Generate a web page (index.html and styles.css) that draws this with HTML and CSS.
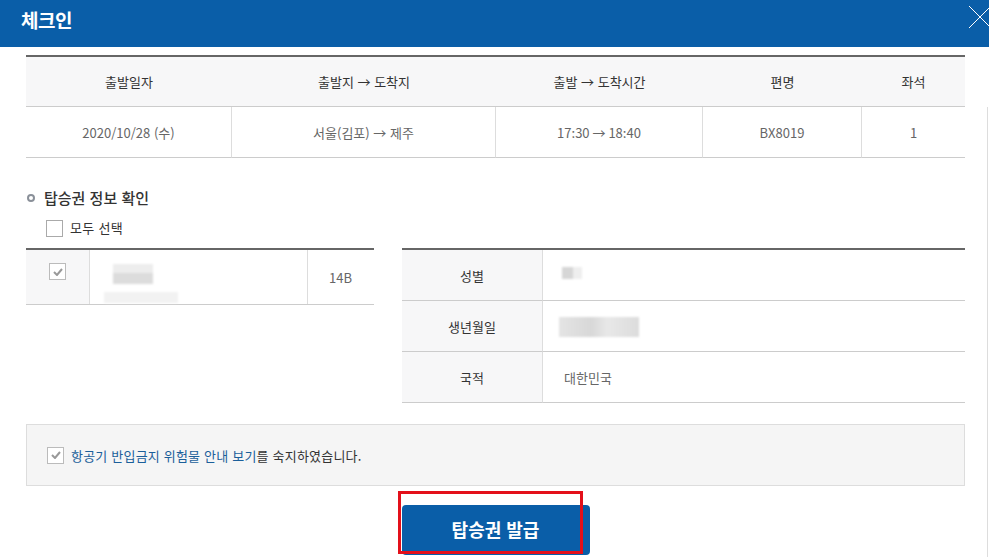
FILE: index.html
```html
<!DOCTYPE html>
<html lang="ko">
<head>
<meta charset="utf-8">
<title>체크인</title>
<link rel="stylesheet" href="styles.css">
</head>
<body>
<div class="modal">
  <div class="header">
    <h1 class="title">체크인</h1>
    <svg class="close" width="24" height="24" viewBox="0 0 24 24"><path d="M1 1 L23 23 M23 1 L1 23" stroke="#fff" stroke-width="1" fill="none"/></svg>
  </div>
  <div class="scrollline"></div>
  <div class="content">
    <div class="flight">
      <div class="fh">출발일자</div>
      <div class="fh">출발지 → 도착지</div>
      <div class="fh">출발 → 도착시간</div>
      <div class="fh">편명</div>
      <div class="fh">좌석</div>
      <div class="fd">2020/10/28 (수)</div>
      <div class="fd">서울(김포) → 제주</div>
      <div class="fd">17:30 → 18:40</div>
      <div class="fd">BX8019</div>
      <div class="fd last">1</div>
    </div>

    <div class="section-title"><span class="ring"></span>탑승권 정보 확인</div>
    <label class="select-all"><span class="cb"></span>모두 선택</label>

    <div class="pax">
      <div class="pax-list">
        <div class="pc check"><span class="cb checked"><svg width="10" height="8" viewBox="0 0 10 8"><path d="M1 4 L4 7 L9 1" stroke="#999" stroke-width="2" fill="none"/></svg></span></div>
        <div class="pc name">
          <span class="blur b1"></span>
          <span class="blur b2"></span>
        </div>
        <div class="pc seat">14B</div>
      </div>
      <div class="pax-info">
        <div class="lbl">성별</div><div class="val"><span class="blur b3"></span></div>
        <div class="lbl">생년월일</div><div class="val"><span class="blur b4"></span></div>
        <div class="lbl">국적</div><div class="val">대한민국</div>
      </div>
    </div>

    <div class="notice">
      <span class="cb checked"><svg width="10" height="8" viewBox="0 0 10 8"><path d="M1 4 L4 7 L9 1" stroke="#999" stroke-width="2" fill="none"/></svg></span>
      <span class="notice-text"><a class="link">항공기 반입금지 위험물 안내 보기</a>를 숙지하였습니다.</span>
    </div>

    <div class="actions">
      <button class="issue">탑승권 발급</button>
      <span class="mark"></span>
    </div>
  </div>
</div>
</body>
</html>
```

FILE: styles.css
```css
* { box-sizing: border-box; }
html, body { margin: 0; padding: 0; }
body {
  width: 989px;
  height: 557px;
  overflow: hidden;
  background: #fff;
  font-family: "Noto Sans CJK KR", "Noto Sans", sans-serif;
  color: #333;
}
.modal { position: relative; width: 989px; height: 557px; }
.header {
  height: 47px;
  background: #0a5ea8;
  display: flex;
  justify-content: space-between;
  align-items: flex-start;
  padding-left: 21px;
  overflow: hidden;
}
.title {
  margin: 8px 0 0 0;
  font-size: 19px;
  line-height: 24px;
  font-weight: 700;
  color: #fff;
  letter-spacing: -0.5px;
}
.close { margin-top: 5px; margin-right: -3px; }
.scrollline {
  position: absolute;
  right: 1px;
  top: 107px;
  bottom: 0;
  width: 1px;
  background: #ddd;
}
.content { padding: 8px 24px 0 26px; }

.flight {
  display: grid;
  grid-template-columns: 206px 264px 207px 159px 103px;
  border-top: 2px solid #666;
}
.fh {
  height: 50px;
  background: #f7f7f8;
  border-bottom: 1px solid #ccc;
  display: flex;
  align-items: center;
  justify-content: center;
  font-size: 13px;
  color: #333;
}
.fd {
  height: 51px;
  border-bottom: 1px solid #ccc;
  border-right: 1px solid #ddd;
  display: flex;
  align-items: center;
  justify-content: center;
  font-size: 13px;
  color: #666;
}
.fd.last { border-right: none; }

.section-title {
  margin-top: 30px;
  display: flex;
  align-items: center;
  font-size: 15px;
  line-height: 20px;
  font-weight: 500;
  color: #333;
}
.ring {
  width: 8px;
  height: 8px;
  border: 2px solid #8a9099;
  border-radius: 50%;
  margin: 0 9px 0 1px;
}
.select-all {
  margin-top: 11px;
  margin-left: 20px;
  display: flex;
  align-items: center;
  font-size: 13px;
  line-height: 18px;
  color: #333;
  letter-spacing: 0.3px;
}
.cb {
  width: 17px;
  height: 17px;
  border: 1px solid #aaa;
  background: #fff;
  display: inline-flex;
  align-items: center;
  justify-content: center;
  flex: none;
}
.select-all .cb { margin-right: 7px; }
.cb.checked { border-color: #bbb; }

.pax {
  margin-top: 11px;
  display: flex;
  gap: 28px;
  align-items: flex-start;
}
.pax-list {
  width: 348px;
  display: grid;
  grid-template-columns: 64px 218px 66px;
  border-top: 2px solid #666;
  border-bottom: 1px solid #ccc;
}
.pc { height: 54px; }
.pc.check {
  background: #f7f7f8;
  border-right: 1px solid #ddd;
  display: flex;
  justify-content: center;
  padding-top: 13px;
}
.pc.name {
  border-right: 1px solid #ddd;
  position: relative;
}
.pc.seat {
  display: flex;
  align-items: center;
  padding-left: 21px;
  font-size: 13px;
  color: #666;
}
.blur { display: block; position: absolute; filter: blur(1px); }
.b1 { left: 23px; top: 14px; width: 40px; height: 20px;
  background: linear-gradient(#ededed 0 45%, #dcdcdc 45% 100%); }
.b2 { left: 14px; top: 42px; width: 74px; height: 11px; background: #f2f2f2; }

.pax-info {
  flex: 1;
  display: grid;
  grid-template-columns: 141px 1fr;
  border-top: 2px solid #666;
}
.lbl {
  height: 51px;
  background: #f7f7f8;
  border-bottom: 1px solid #ccc;
  border-right: 1px solid #ddd;
  display: flex;
  align-items: center;
  justify-content: center;
  font-size: 13px;
  color: #333;
}
.val {
  height: 51px;
  border-bottom: 1px solid #ccc;
  display: flex;
  align-items: center;
  padding-left: 21px;
  font-size: 13px;
  color: #666;
  position: relative;
}
.b3 { left: 19px; top: 17px; width: 20px; height: 12px;
  background: linear-gradient(90deg, #d6d6d6 0 55%, #eee 55% 100%); }
.b4 { left: 16px; top: 16px; width: 80px; height: 20px;
  background: linear-gradient(90deg, #e4e4e4, #d8d8d8 40%, #e8e8e8 60%, #dcdcdc); }

.notice {
  margin-top: 21px;
  height: 62px;
  background: #f5f5f5;
  border: 1px solid #ddd;
  display: flex;
  align-items: center;
  padding-left: 20px;
  font-size: 13px;
  letter-spacing: 0.2px;
}
.notice .cb { margin-right: 7px; }
.notice-text { color: #333; }
.link { color: #1b5f9a; }

.actions {
  position: relative;
  margin-top: 19px;
  display: flex;
  justify-content: center;
}
.issue {
  width: 188px;
  height: 50px;
  border: none;
  border-radius: 4px;
  background: #0a5ea8;
  color: #fff;
  font-family: inherit;
  font-size: 18px;
  font-weight: 700;
  padding: 0 0 2px 0;
}
.mark {
  position: absolute;
  left: 372px;
  top: -14px;
  width: 185px;
  height: 63px;
  border: 3px solid #e3101a;
}
```
